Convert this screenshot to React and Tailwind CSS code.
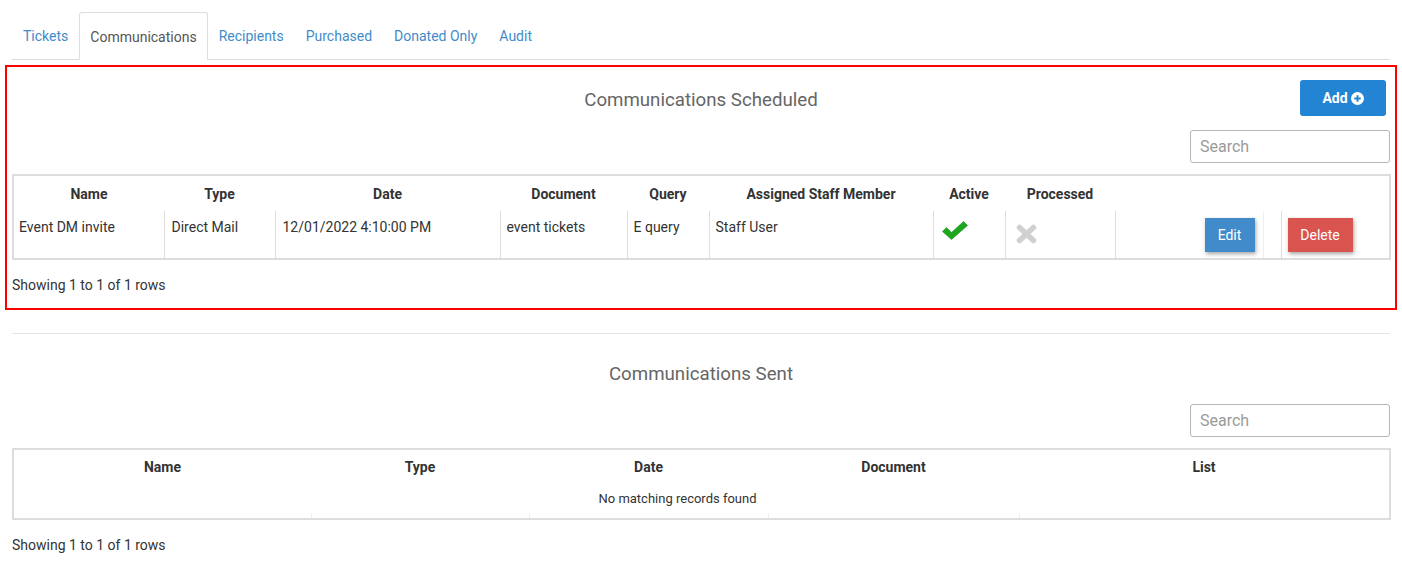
const tabs = ["Tickets", "Communications", "Recipients", "Purchased", "Donated Only", "Audit"];

const scheduledCols = [
  { label: "Name", w: 151 },
  { label: "Type", w: 111 },
  { label: "Date", w: 225 },
  { label: "Document", w: 127 },
  { label: "Query", w: 82 },
  { label: "Assigned Staff Member", w: 224 },
  { label: "Active", w: 72 },
  { label: "Processed", w: 110 },
  { label: "", w: 148 },
  { label: "", w: 18 },
  { label: "", w: 109 },
];

const sentCols = [
  { label: "Name", w: 298 },
  { label: "Type", w: 218 },
  { label: "Date", w: 239 },
  { label: "Document", w: 251 },
  { label: "List", w: 371 },
];

function SearchBox() {
  return (
    <div className="flex justify-end">
      <input
        placeholder="Search"
        className="h-[33px] w-[200px] rounded-[3px] border border-[#b5b5b5] px-[9px] text-[16px] text-[#555] placeholder:text-[#9a9a9a] outline-none"
      />
    </div>
  );
}

function AddIcon() {
  return (
    <svg width="13" height="13" viewBox="0 0 16 16" className="ml-[3px]">
      <circle cx="8" cy="8" r="8" fill="#fff" />
      <path d="M8 4v8M4 8h8" stroke="#2384d3" strokeWidth="2.4" />
    </svg>
  );
}

function CheckMark() {
  return (
    <svg width="26" height="19" viewBox="0 0 26 19">
      <polygon points="0.5,10.5 4.5,6.5 9.5,11.5 21.5,0.5 25.5,4.5 9.5,18.5" fill="#1ea71e" stroke="#178f17" strokeWidth="0.6" strokeLinejoin="round" />
    </svg>
  );
}

function Cross() {
  return (
    <svg width="21" height="20" viewBox="0 0 21 20">
      <path d="M3.5 3.5l14 13M17.5 3.5l-14 13" stroke="#d0d0d0" strokeWidth="5.5" strokeLinecap="round" />
    </svg>
  );
}

export default function App() {
  return (
    <div className="min-h-[571px] bg-white px-[12px] text-[14px] text-[#333]" style={{ fontFamily: "Roboto, 'Liberation Sans', sans-serif" }}>
      <ul className="flex h-[60px] items-end border-b border-[#ddd] pt-[12px]">
        {tabs.map((t, i) => (
          <li
            key={t}
            className={
              i === 1
                ? "-mb-px flex h-[48px] items-center rounded-t-[3px] border border-b-white border-[#ddd] bg-white px-[10px] pt-[2px] text-[#555]"
                : "flex h-[47px] items-center px-[11px] pt-[2px] text-[#428bca]"
            }
          >
            {t}
          </li>
        ))}
      </ul>

      <section className="-mx-[7px] mt-[5px] border-2 border-[#f00] px-[5px] pb-[12px]">
        <div className="relative flex h-[63px] items-center justify-center">
          <h2 className="mt-[3px] text-[18.7px] text-[#666]">Communications Scheduled</h2>
          <button className="absolute right-[4px] top-[13px] flex h-[36px] w-[86px] items-center justify-center rounded-[3px] bg-[#2384d3] text-[14px] font-bold text-white">
            Add <AddIcon />
          </button>
        </div>
        <SearchBox />
        <table className="mt-[11px] w-[1377px] table-fixed border-collapse border-2 border-[#ddd]">
          <colgroup>
            {scheduledCols.map((c, i) => (
              <col key={i} style={{ width: c.w }} />
            ))}
          </colgroup>
          <thead>
            <tr className="h-[36px]">
              {scheduledCols.map((c, i) => (
                <th key={i} className="pt-[2px] text-center font-bold">
                  {c.label}
                </th>
              ))}
            </tr>
          </thead>
          <tbody>
            <tr className="h-[48px] align-top">
              <td className="px-[5px] pt-[6px]">Event DM invite</td>
              <td className="border-l border-[#ddd] px-[7px] pt-[6px]">Direct Mail</td>
              <td className="border-l border-[#ddd] px-[7px] pt-[6px]">12/01/2022 4:10:00 PM</td>
              <td className="border-l border-[#ddd] px-[6px] pt-[6px]">event tickets</td>
              <td className="border-l border-[#ddd] px-[6px] pt-[6px]">E query</td>
              <td className="border-l border-[#ddd] px-[6px] pt-[6px]">Staff User</td>
              <td className="border-l border-[#ddd] px-[8px] pt-[10px]">
                <CheckMark />
              </td>
              <td className="border-l border-[#ddd] px-[10px] pt-[13px]">
                <Cross />
              </td>
              <td className="border-l border-[#ddd] pr-[8px] pt-[7px] text-right">
                <button className="h-[34px] w-[50px] bg-[#428bca] text-white shadow-[1px_2px_4px_rgba(0,0,0,0.35)]">Edit</button>
              </td>
              <td className="border-l border-[#eee]"></td>
              <td className="border-l border-[#ddd] pl-[6px] pt-[7px]">
                <button className="h-[34px] w-[65px] bg-[#d9534f] text-white shadow-[1px_2px_4px_rgba(0,0,0,0.35)]">Delete</button>
              </td>
            </tr>
          </tbody>
        </table>
        <p className="mt-[15px]">Showing 1 to 1 of 1 rows</p>
      </section>

      <hr className="mt-[23px] border-[#e5e5e5]" />

      <div className="flex h-[79px] items-center justify-center">
        <h2 className="mt-[2px] text-[18.7px] text-[#666]">Communications Sent</h2>
      </div>
      <div className="-mt-[9px]">
        <SearchBox />
      </div>
      <table className="mt-[11px] w-[1377px] table-fixed border-collapse border-2 border-[#ddd]">
        <colgroup>
          {sentCols.map((c, i) => (
            <col key={i} style={{ width: c.w }} />
          ))}
        </colgroup>
        <thead>
          <tr className="h-[36px]">
            {sentCols.map((c) => (
              <th key={c.label} className="text-center font-bold">
                {c.label}
              </th>
            ))}
          </tr>
        </thead>
        <tbody>
          <tr className="h-[28px]">
            <td colSpan={5} className="pr-[48px] pt-[4px] text-center align-top text-[13px]">
              No matching records found
            </td>
          </tr>
          <tr className="h-[6px]">
            {sentCols.map((c, i) => (
              <td key={i} className={i === 0 ? "" : "border-l border-[#eee]"}></td>
            ))}
          </tr>
        </tbody>
      </table>
      <p className="mt-[15px]">Showing 1 to 1 of 1 rows</p>
    </div>
  );
}
